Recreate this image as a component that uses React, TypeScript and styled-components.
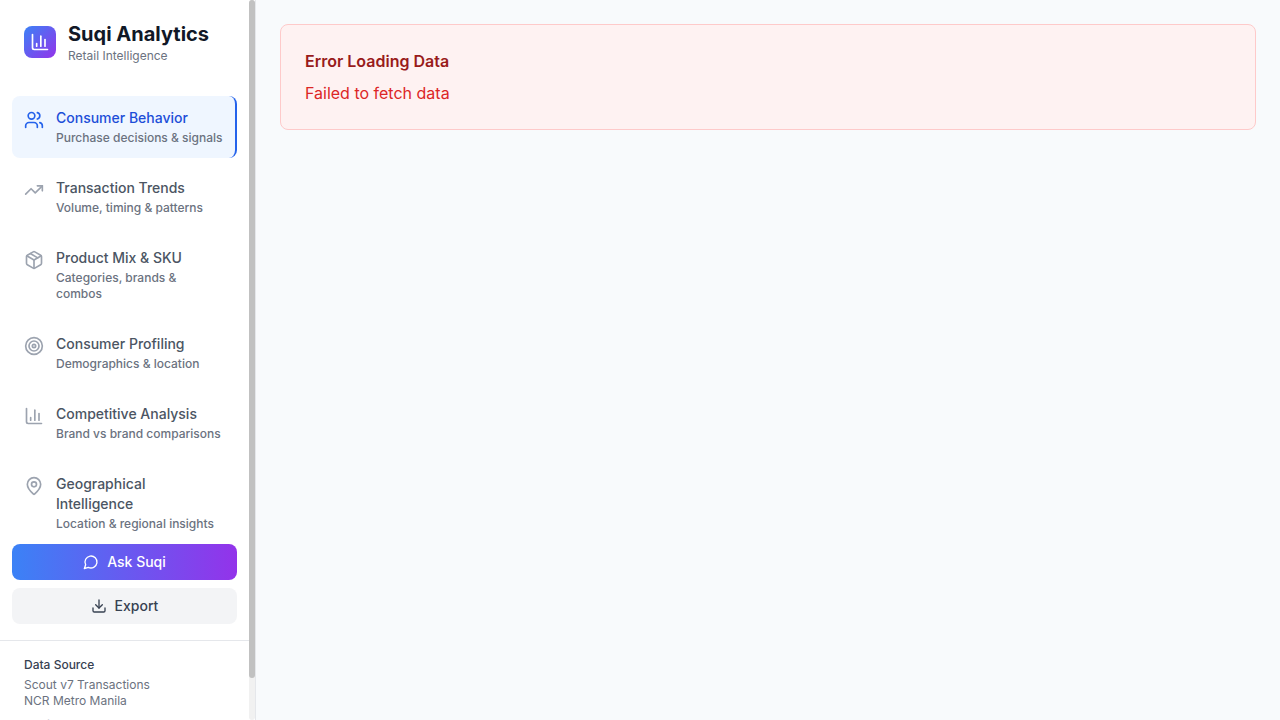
import React from "react";
import styled, { createGlobalStyle, css } from "styled-components";
import {
  ChartColumn,
  Download,
  MapPin,
  Package,
  Target,
  TrendingUp,
  Users,
  type LucideIcon,
} from "lucide-react";

const GlobalStyle = createGlobalStyle`
  *, *::before, *::after { box-sizing: border-box; }
  body {
    margin: 0;
    font-family: Inter, "Liberation Sans", sans-serif;
    font-size: 16px;
    line-height: 24px;
    color: #111827;
    background: #f9fafb;
  }
  h1, h2, p { margin: 0; }
  button { font: inherit; border: 0; cursor: pointer; }
`;

const Layout = styled.div`
  display: flex;
  height: 100vh;
  overflow: hidden;
  background: #f8fafc;
`;

const Sidebar = styled.aside`
  display: flex;
  flex: 0 0 256px;
  background: #ffffff;
  border-right: 1px solid #e5e7eb;
`;

const SidebarContent = styled.div`
  display: flex;
  flex: 1;
  flex-direction: column;
  min-width: 0;
  overflow-x: hidden;
  overflow-y: auto;
  scrollbar-width: none;
`;

const ScrollTrack = styled.div`
  flex: 0 0 6px;
  border-radius: 3px;
  background: #f1f1f1;
`;

const ScrollThumb = styled.div`
  height: 678px;
  border-radius: 3px;
  background: #c1c1c1;
`;

const Brand = styled.header`
  display: flex;
  align-items: center;
  gap: 12px;
  padding: 20px 24px 16px;
`;

const Logo = styled.div`
  display: flex;
  align-items: center;
  justify-content: center;
  width: 32px;
  height: 32px;
  border-radius: 8px;
  color: #ffffff;
  background: linear-gradient(to bottom right, #3b82f6, #9333ea);
`;

const BrandName = styled.h1`
  font-size: 20px;
  line-height: 28px;
  font-weight: 700;
  white-space: nowrap;
`;

const Tagline = styled.p`
  font-size: 12px;
  line-height: 16px;
  color: #6b7280;
`;

const Nav = styled.nav`
  display: flex;
  flex-direction: column;
  gap: 8px;
  padding: 16px 12px 0;
`;

const NavItem = styled.button<{ $active?: boolean }>`
  display: flex;
  align-items: flex-start;
  gap: 12px;
  padding: 12px;
  border-radius: 8px;
  text-align: left;
  font-size: 14px;
  line-height: 20px;
  font-weight: 500;
  color: #4b5563;
  background: transparent;

  svg {
    flex: none;
    margin-top: 2px;
    color: #9ca3af;
  }

  ${({ $active }) =>
    $active &&
    css`
      color: #1d4ed8;
      background: #eff6ff;
      border-right: 2px solid #2563eb;

      svg { color: #2563eb; }
    `}
`;

const NavText = styled.div`
  flex: 1;
  min-width: 0;
`;

const NavNote = styled.div`
  margin-top: 2px;
  font-size: 12px;
  line-height: 16px;
  color: #6b7280;
`;

const Actions = styled.div`
  display: flex;
  flex-direction: column;
  gap: 8px;
  padding: 0 12px 16px;
`;

const ActionButton = styled.button<{ $primary?: boolean }>`
  display: flex;
  align-items: center;
  justify-content: center;
  gap: 8px;
  padding: 8px 12px;
  border-radius: 8px;
  font-size: 14px;
  line-height: 20px;
  font-weight: 500;
  color: ${({ $primary }) => ($primary ? "#ffffff" : "#374151")};
  background: ${({ $primary }) =>
    $primary ? "linear-gradient(to right, #3b82f6, #9333ea)" : "#f3f4f6"};
`;

const Source = styled.footer`
  padding: 16px 24px 32px;
  border-top: 1px solid #e5e7eb;
  font-size: 12px;
  line-height: 16px;
  color: #6b7280;
`;

const SourceTitle = styled.div`
  margin-bottom: 4px;
  font-weight: 500;
  color: #374151;
`;

const SourceStatus = styled.div`
  margin-top: 8px;
  color: #9ca3af;
`;

const Main = styled.main`
  flex: 1;
  padding: 24px;
  overflow: auto;
`;

const ErrorCard = styled.section`
  padding: 24px;
  border: 1px solid #fecaca;
  border-radius: 8px;
  background: #fef2f2;
`;

const ErrorTitle = styled.h2`
  margin-bottom: 8px;
  font-size: 16px;
  line-height: 24px;
  font-weight: 600;
  color: #991b1b;
`;

const ErrorText = styled.p`
  color: #dc2626;
`;

const sections: { title: string; note: string; icon: LucideIcon }[] = [
  { title: "Consumer Behavior", note: "Purchase decisions & signals", icon: Users },
  { title: "Transaction Trends", note: "Volume, timing & patterns", icon: TrendingUp },
  { title: "Product Mix & SKU", note: "Categories, brands & combos", icon: Package },
  { title: "Consumer Profiling", note: "Demographics & location", icon: Target },
  { title: "Competitive Analysis", note: "Brand vs brand comparisons", icon: ChartColumn },
  { title: "Geographical Intelligence", note: "Location & regional insights", icon: MapPin },
];

const ChatIcon = () => (
  <svg
    width="16"
    height="16"
    viewBox="0 0 24 24"
    fill="none"
    stroke="currentColor"
    strokeWidth="2"
    strokeLinecap="round"
    strokeLinejoin="round"
  >
    <path d="M7.9 20A9 9 0 1 0 4 16.1L2 22Z" />
  </svg>
);

export default function App() {
  return (
    <>
      <GlobalStyle />
      <Layout>
        <Sidebar>
          <SidebarContent>
            <Brand>
              <Logo>
                <ChartColumn size={20} />
              </Logo>
              <div>
                <BrandName>Suqi Analytics</BrandName>
                <Tagline>Retail Intelligence</Tagline>
              </div>
            </Brand>
            <Nav>
              {sections.map(({ title, note, icon: Icon }, index) => (
                <NavItem key={title} $active={index === 0}>
                  <Icon size={20} />
                  <NavText>
                    {title}
                    <NavNote>{note}</NavNote>
                  </NavText>
                </NavItem>
              ))}
            </Nav>
            <Actions>
              <ActionButton $primary>
                <ChatIcon />
                Ask Suqi
              </ActionButton>
              <ActionButton>
                <Download size={16} />
                Export
              </ActionButton>
            </Actions>
            <Source>
              <SourceTitle>Data Source</SourceTitle>
              <div>Scout v7 Transactions</div>
              <div>NCR Metro Manila</div>
              <SourceStatus>Partial</SourceStatus>
            </Source>
          </SidebarContent>
          <ScrollTrack>
            <ScrollThumb />
          </ScrollTrack>
        </Sidebar>
        <Main>
          <ErrorCard>
            <ErrorTitle>Error Loading Data</ErrorTitle>
            <ErrorText>Failed to fetch data</ErrorText>
          </ErrorCard>
        </Main>
      </Layout>
    </>
  );
}
